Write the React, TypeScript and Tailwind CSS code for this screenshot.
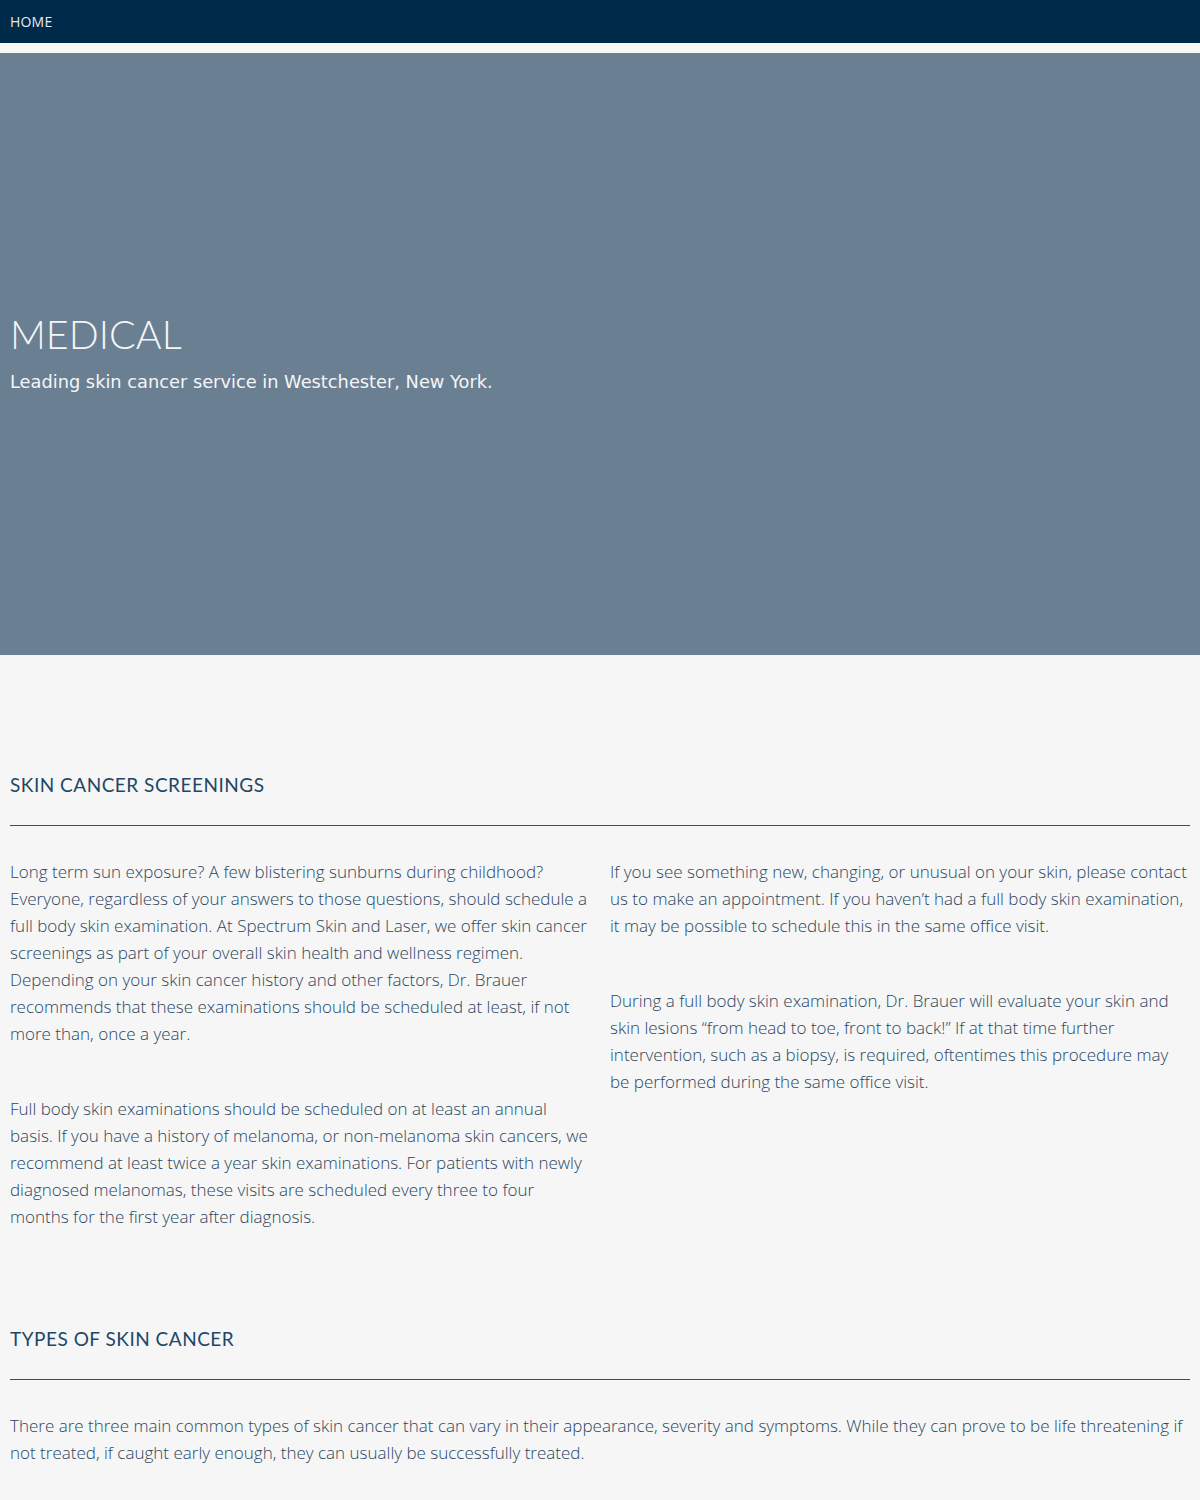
import React from "react";

const bodyFont = { fontFamily: '"Open Sans", "Liberation Sans", sans-serif' };
const headFont = { fontFamily: '"Lato", "Noto Sans", sans-serif' };

const Section: React.FC<{ title: string; children: React.ReactNode }> = ({ title, children }) => (
  <section className="px-[10px]">
    <h2 className="text-[19px] leading-[24px] tracking-[0.5px] text-[#204866] uppercase" style={headFont}>
      {title}
    </h2>
    <hr className="mt-[28px] border-0 border-t border-[#4a4a4a]" />
    <div className="mt-[32px]">{children}</div>
  </section>
);

const P: React.FC<{ children: React.ReactNode; className?: string }> = ({ children, className }) => (
  <p className={"text-[17px] leading-[27px] font-light text-[#29465f] " + (className ?? "")} style={bodyFont}>
    {children}
  </p>
);

export default function App() {
  return (
    <div className="min-h-[1500px] bg-[#f6f6f6]">
      <nav className="h-[43px] bg-[#002a4a] flex items-center px-[10px]">
        <a className="text-[14px] text-[#e6ebf0] tracking-[0.2px]" style={bodyFont}>HOME</a>
      </nav>
      <div className="h-[10px] bg-[#f7f7f7]" />
      <header className="h-[602px] bg-[#6a7f92] flex flex-col justify-center px-[10px] pb-[4px]">
        <h1 className="text-[39.5px] leading-[46px] font-light text-[#f4f6f8]" style={headFont}>MEDICAL</h1>
        <p
          className="mt-[13px] text-[17.8px] leading-[24px] text-[#f4f6f8]"
          style={{ fontFamily: '"DejaVu Sans", Verdana, sans-serif' }}
        >
          Leading skin cancer service in Westchester, New York.
        </p>
      </header>

      <div className="pt-[118px]">
        <Section title="Skin Cancer Screenings">
          <div className="grid grid-cols-2 gap-[20px]">
            <div className="flex flex-col gap-[48px]">
              <P>
                Long term sun exposure? A few blistering sunburns during childhood? Everyone, regardless of your answers to those questions, should schedule a full body skin examination. At Spectrum Skin and Laser, we offer skin cancer screenings as part of your overall skin health and wellness regimen. Depending on your skin cancer history and other factors, Dr. Brauer recommends that these examinations should be scheduled at least, if not more than, once a year.
              </P>
              <P>
                Full body skin examinations should be scheduled on at least an annual basis. If you have a history of melanoma, or non-melanoma skin cancers, we recommend at least twice a year skin examinations. For patients with newly diagnosed melanomas, these visits are scheduled every three to four months for the first year after diagnosis.
              </P>
            </div>
            <div className="flex flex-col gap-[48px]">
              <P>
                If you see something new, changing, or unusual on your skin, please contact us to make an appointment. If you haven’t had a full body skin examination, it may be possible to schedule this in the same office visit.
              </P>
              <P>
                During a full body skin examination, Dr. Brauer will evaluate your skin and skin lesions “from head to toe, front to back!” If at that time further intervention, such as a biopsy, is required, oftentimes this procedure may be performed during the same office visit.
              </P>
            </div>
          </div>
        </Section>

        <div className="h-[97px]" />

        <Section title="Types of Skin Cancer">
          <P>
            There are three main common types of skin cancer that can vary in their appearance, severity and symptoms. While they can prove to be life threatening if not treated, if caught early enough, they can usually be successfully treated.
          </P>
        </Section>
      </div>
    </div>
  );
}
